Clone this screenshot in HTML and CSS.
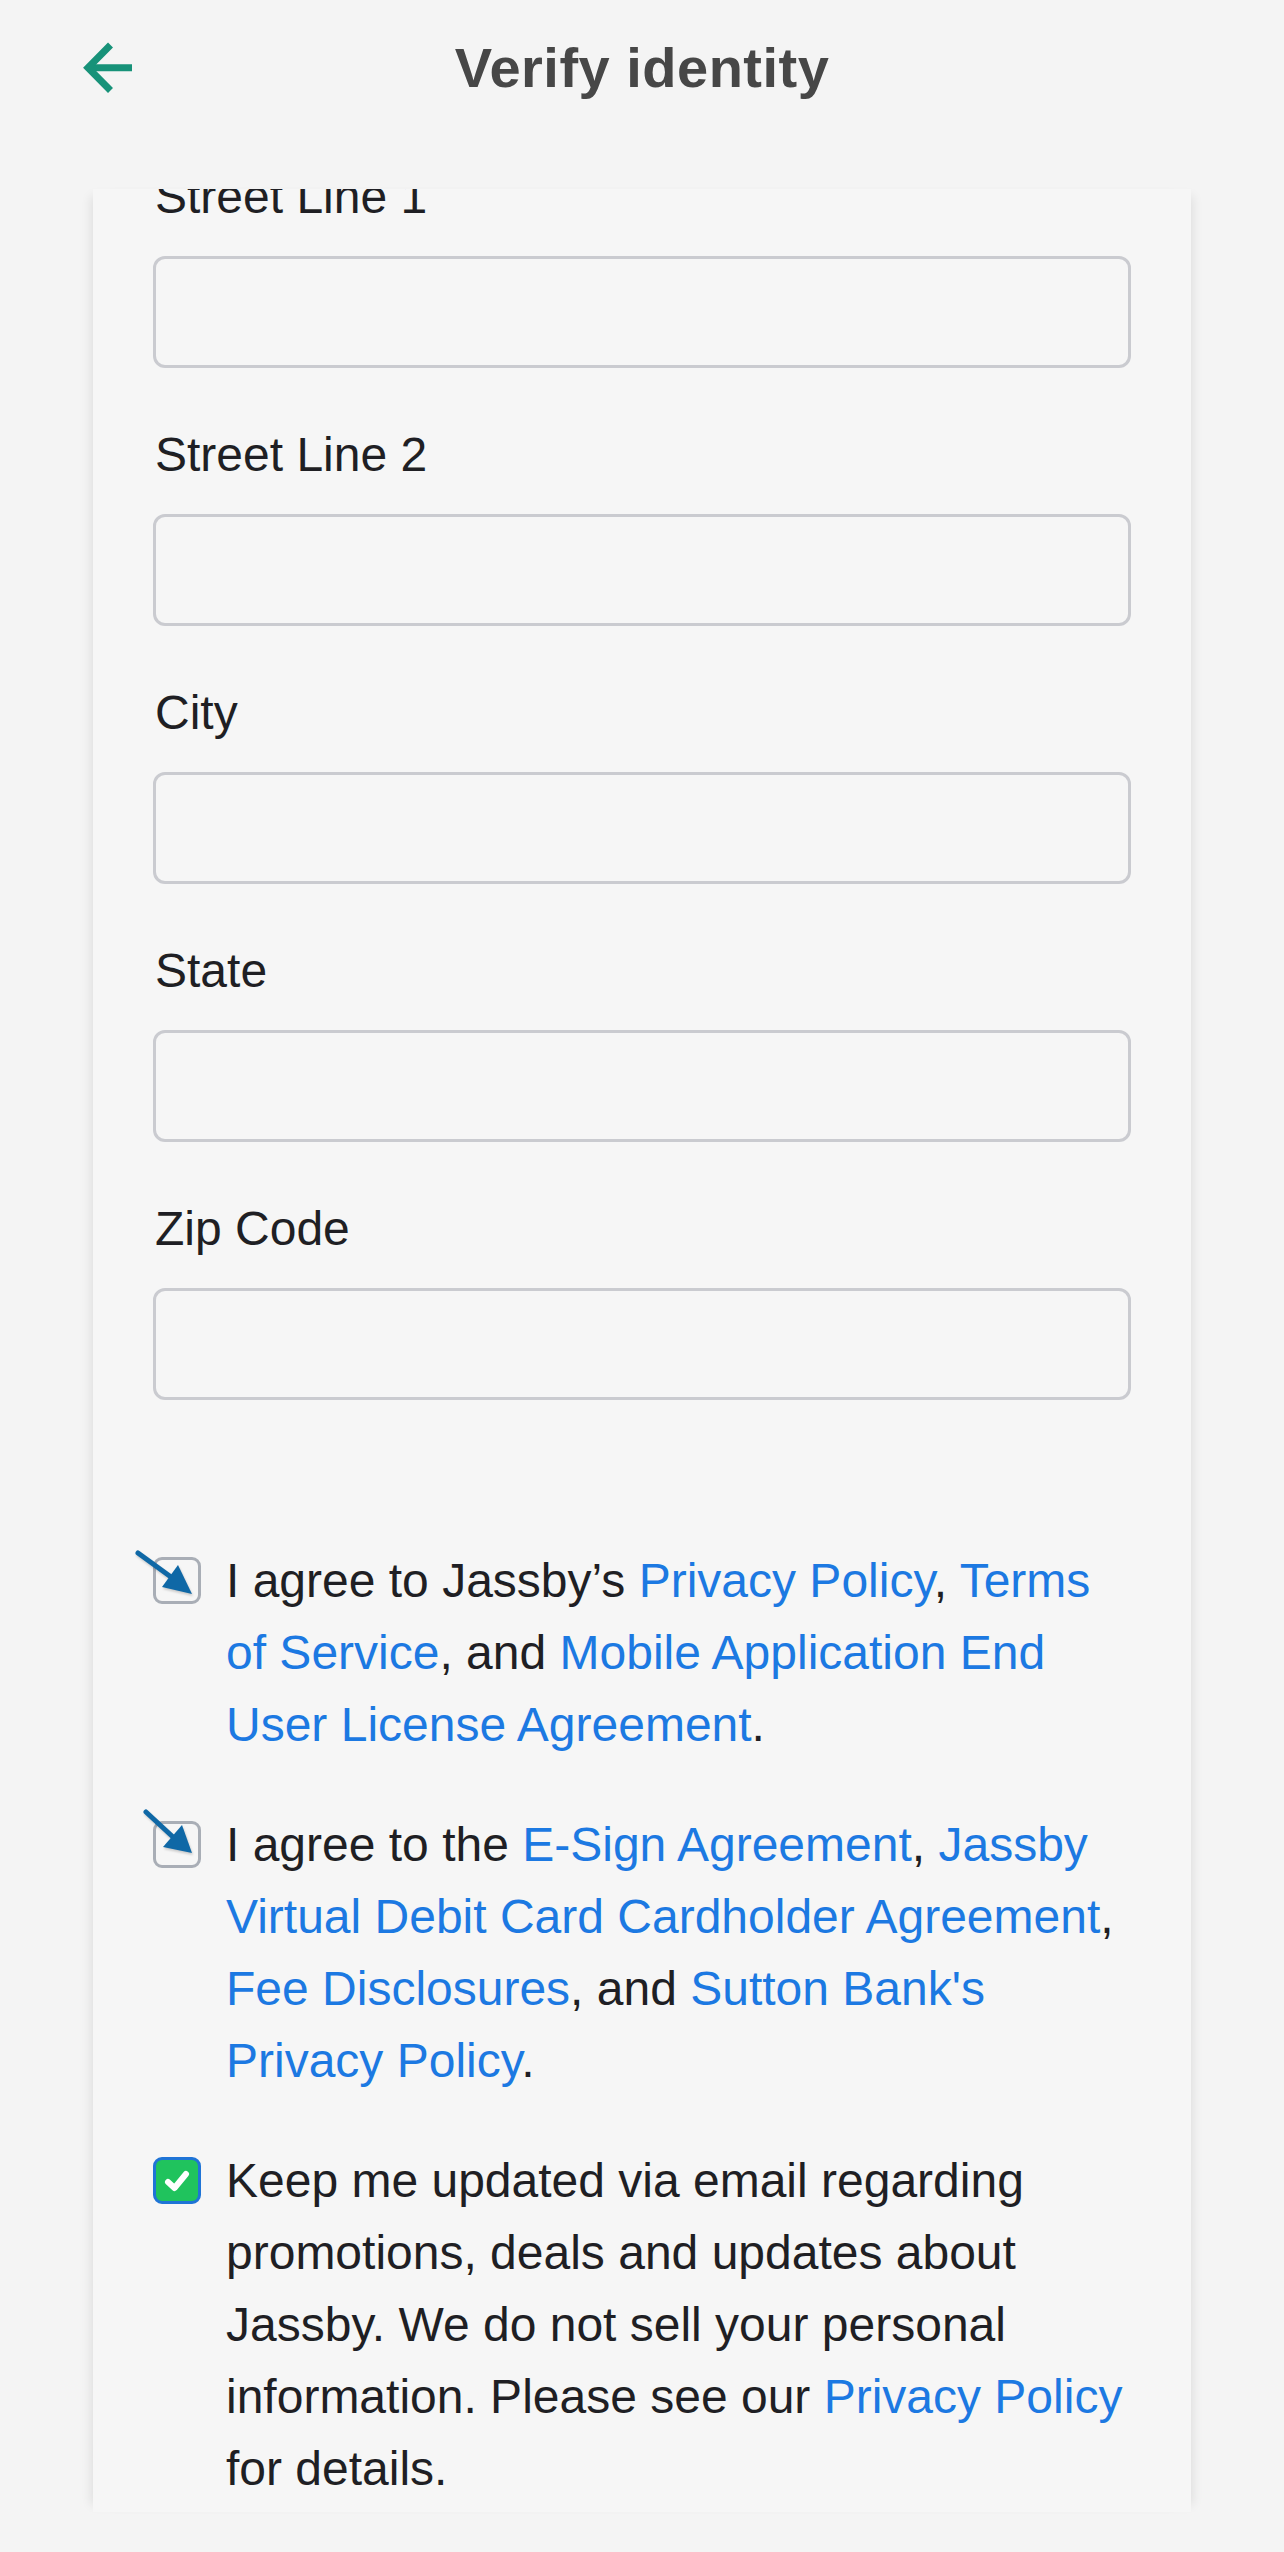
FILE: index.html
```html
<!DOCTYPE html>
<html lang="en">
<head>
<meta charset="utf-8">
<title>Verify identity</title>
<link rel="stylesheet" href="styles.css">
</head>
<body>
<header class="topbar">
  <a class="back" href="#" aria-label="Back">
    <svg width="56" height="56" viewBox="0 0 56 56" fill="none" stroke="#179279" stroke-width="7">
      <path d="M50 27.7H6"/>
      <path d="M28.5 5L6 27.7L28.5 50.5"/>
    </svg>
  </a>
  <h1 class="title">Verify identity</h1>
  <span class="spacer"></span>
</header>

<main class="card">
  <form class="form">
    <div class="fields">
      <label class="field"><span class="label">Street Line 1</span><input class="input" type="text"></label>
      <label class="field"><span class="label">Street Line 2</span><input class="input" type="text"></label>
      <label class="field"><span class="label">City</span><input class="input" type="text"></label>
      <label class="field"><span class="label">State</span><input class="input" type="text"></label>
      <label class="field"><span class="label">Zip Code</span><input class="input" type="text"></label>
    </div>

    <div class="agreements">
      <div class="agree-row">
        <span class="box">
          <svg class="pointer" width="70" height="60" viewBox="0 0 70 60">
            <line x1="5" y1="11" x2="38" y2="35" stroke="#0f68a6" stroke-width="5" stroke-linecap="round"/>
            <polygon points="45,23 29,45 59,52" fill="#0f68a6"/>
          </svg>
        </span>
        <p class="agree-text">I agree to Jassby’s <a href="#">Privacy Policy</a>, <a href="#">Terms</a><br><a href="#">of Service</a>, and <a href="#">Mobile Application End</a><br><a href="#">User License Agreement</a>.</p>
      </div>

      <div class="agree-row">
        <span class="box">
          <svg class="pointer" width="70" height="60" viewBox="0 0 70 60">
            <line x1="13" y1="6" x2="40" y2="31" stroke="#0f68a6" stroke-width="5" stroke-linecap="round"/>
            <polygon points="49,19 30,41 59,47" fill="#0f68a6"/>
          </svg>
        </span>
        <p class="agree-text">I agree to the <a href="#">E-Sign Agreement</a>, <a href="#">Jassby</a><br><a href="#">Virtual Debit Card Cardholder Agreement</a>,<br><a href="#">Fee Disclosures</a>, and <a href="#">Sutton Bank's</a><br><a href="#">Privacy Policy</a>.</p>
      </div>

      <div class="agree-row">
        <span class="box checked">
          <svg width="42" height="42" viewBox="0 0 42 42" fill="none" stroke="#ffffff" stroke-width="6" stroke-linecap="round" stroke-linejoin="round">
            <path d="M12 22L18.5 28L30 14"/>
          </svg>
        </span>
        <p class="agree-text">Keep me updated via email regarding<br>promotions, deals and updates about<br>Jassby. We do not sell your personal<br>information. Please see our <a href="#">Privacy Policy</a><br>for details.</p>
      </div>
    </div>
  </form>
</main>
</body>
</html>
```

FILE: styles.css
```css
html, body {
  margin: 0;
  padding: 0;
}

body {
  background: #f4f4f4;
  font-family: "Liberation Sans", Arial, "Helvetica Neue", sans-serif;
  color: #1f1f24;
  width: 1284px;
  height: 2552px;
  overflow: hidden;
}

.topbar {
  height: 136px;
  padding: 0 82px;
  display: grid;
  grid-template-columns: 1fr auto 1fr;
  align-items: center;
  box-sizing: border-box;
}

.back {
  display: flex;
  width: 56px;
  height: 56px;
  margin-top: 0;
}

.title {
  margin: 0;
  font-size: 56px;
  line-height: 56px;
  font-weight: 700;
  letter-spacing: 0.5px;
  color: #474747;
}

.card {
  display: block;
  margin: 53px 93px 0;
  height: 2323px;
  padding: 0 60px;
  box-sizing: border-box;
  background: #f6f6f6;
  overflow: hidden;
  box-shadow: -9px 0 10px -7px rgba(0, 0, 0, 0.09), 9px 0 10px -7px rgba(0, 0, 0, 0.09);
}

.form {
  margin: -21px 0 0;
  display: flex;
  flex-direction: column;
}

.fields {
  display: flex;
  flex-direction: column;
  gap: 58px;
}

.field {
  display: flex;
  flex-direction: column;
  gap: 30px;
}

.label {
  font-size: 48px;
  line-height: 58px;
  padding-left: 2px;
  color: #1f1f24;
}

.input {
  display: block;
  width: 100%;
  height: 112px;
  box-sizing: border-box;
  margin: 0;
  border: 3px solid #cacbd0;
  border-radius: 12px;
  background: #f6f6f6;
  font: inherit;
  font-size: 48px;
  padding: 0 24px;
}

.agreements {
  margin-top: 145px;
  display: flex;
  flex-direction: column;
  gap: 48px;
}

.agree-row {
  display: flex;
  align-items: flex-start;
  gap: 25px;
}

.box {
  position: relative;
  flex: 0 0 auto;
  width: 48px;
  height: 47px;
  margin-top: 12px;
  box-sizing: border-box;
  border: 3px solid #a9aeb6;
  border-radius: 9px;
  display: flex;
  align-items: center;
  justify-content: center;
}

.box.checked {
  background: #20c35d;
  border-color: #1f74d6;
}

.pointer {
  position: absolute;
  left: -23px;
  top: -18px;
  filter: drop-shadow(1px 2px 1px rgba(0, 0, 0, 0.18));
}

.agree-text {
  margin: 0;
  font-size: 48px;
  line-height: 72px;
  white-space: nowrap;
  color: #1f1f24;
}

.agree-text a {
  color: #1c79e2;
  text-decoration: none;
}
```
